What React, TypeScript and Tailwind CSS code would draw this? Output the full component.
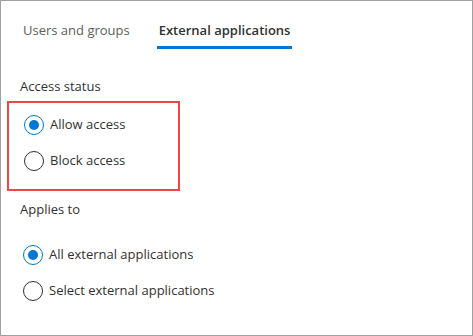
import React from "react";

function Radio({ checked, label }: { checked?: boolean; label: string }) {
  return (
    <label className="flex items-center h-[36px] gap-[6px]">
      <span
        className={
          "flex items-center justify-center w-[20px] h-[20px] rounded-full border " +
          (checked ? "border-[#0078d4]" : "border-[#323130]")
        }
      >
        {checked && <span className="w-[10px] h-[10px] rounded-full bg-[#0078d4]" />}
      </span>
      <span className="text-[13px] text-[#323130]">{label}</span>
    </label>
  );
}

export default function App() {
  return (
    <div
      className="w-[473px] h-[336px] bg-white border border-[#a0a0a0] overflow-hidden"
      style={{ fontFamily: '"Open Sans", "Noto Sans", sans-serif' }}
    >
      <div className="flex pt-[20px] pl-[21px] gap-[26px]">
        <div className="h-[28px] flex items-start px-[1px] text-[13px] text-[#605e5c]">Users and groups</div>
        <div className="h-[28px] flex items-start border-b-[3px] border-[#0078d4] px-[2px] text-[13px] font-semibold text-[#323130]">
          External applications
        </div>
      </div>

      <div className="pl-[19px] pt-[28px] text-[13px] text-[#323130]">Access status</div>
      <div className="ml-[6px] mt-[4px] w-[173px] border-2 border-[#f04646] pl-[15px] pt-[4px] pb-[10px]">
        <Radio checked label="Allow access" />
        <Radio label="Block access" />
      </div>

      <div className="pl-[19px] pt-[9px] text-[13px] text-[#323130]">Applies to</div>
      <div className="pl-[22px] pt-[18px]">
        <Radio checked label="All external applications" />
        <Radio label="Select external applications" />
      </div>
    </div>
  );
}
